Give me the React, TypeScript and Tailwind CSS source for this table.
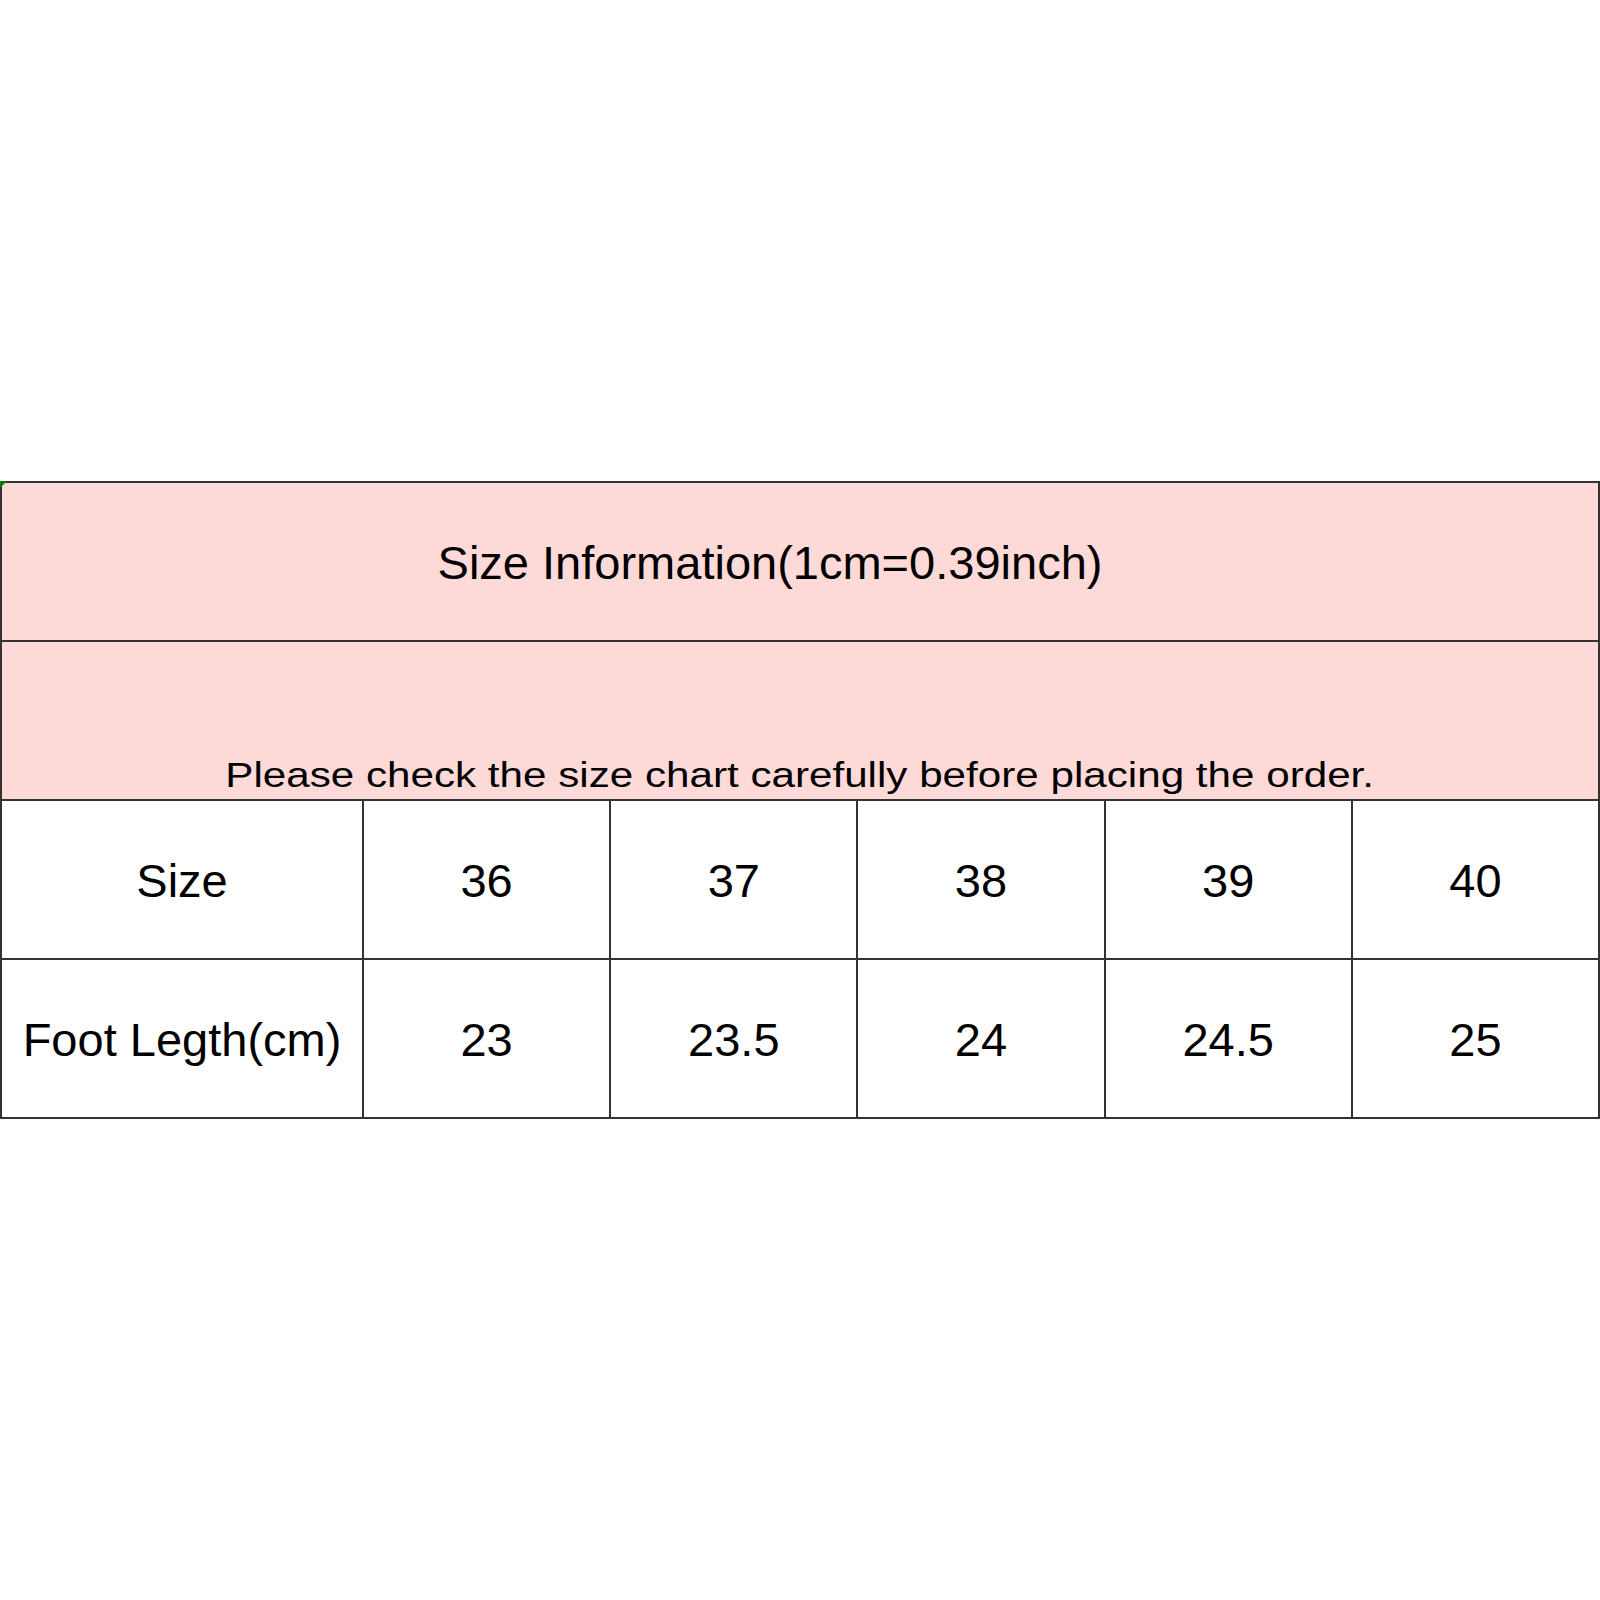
const sizes = ['36', '37', '38', '39', '40'];
const lengths = ['23', '23.5', '24', '24.5', '25'];

const App = () => {
  return (
    <div className="w-[1600px] h-[1600px] bg-white pt-[481px] text-black" style={{ fontFamily: '"Liberation Sans", Arial, sans-serif' }}>
      <div className="relative border-2 border-[#333333]">
        {/* little green corner mark */}
        <div className="absolute -left-[2px] -top-[2px] w-0 h-0 border-t-[7px] border-r-[7px] border-t-[#0a7a10] border-r-transparent" />

        {/* Title */}
        <div className="h-[159px] border-b-2 border-[#333333] bg-[#fdd9d7] flex items-center justify-center pr-[60px] pt-[2px]">
          <span className="text-[47px] leading-none">Size Information(1cm=0.39inch)</span>
        </div>

        {/* Note */}
        <div className="h-[159px] border-b-2 border-[#333333] bg-[#fdd9d7] flex items-end justify-center pb-[7px]">
          <span className="text-[35px] leading-none scale-x-[1.205] whitespace-nowrap">
            Please check the size chart carefully before placing the order.
          </span>
        </div>

        {/* Size row */}
        <div className="grid grid-cols-[360px_repeat(5,1fr)] h-[159px] border-b-2 border-[#333333]">
          <div className="flex items-center justify-center pt-[4px] text-[47px]">Size</div>
          {sizes.map((s) => (
            <div key={s} className="flex items-center justify-center pt-[4px] border-l-2 border-[#333333] text-[47px]">
              {s}
            </div>
          ))}
        </div>

        {/* Foot length row */}
        <div className="grid grid-cols-[360px_repeat(5,1fr)] h-[157px]">
          <div className="flex items-center justify-center pt-[4px] text-[47px]">Foot Legth(cm)</div>
          {lengths.map((l) => (
            <div key={l} className="flex items-center justify-center pt-[4px] border-l-2 border-[#333333] text-[47px]">
              {l}
            </div>
          ))}
        </div>
      </div>
    </div>
  );
};

export default App;
